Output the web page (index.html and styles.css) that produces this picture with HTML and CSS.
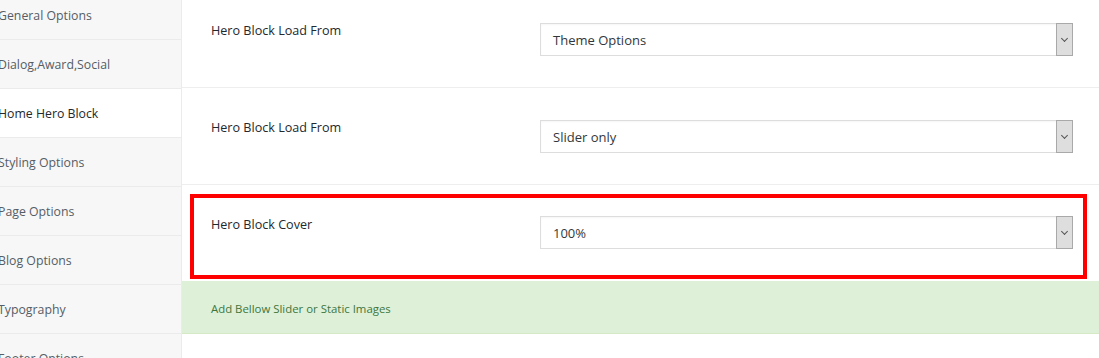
FILE: index.html
```html
<!DOCTYPE html>
<html lang="en">
<head>
    <meta charset="UTF-8">
    <meta name="viewport" content="width=device-width, initial-scale=1.0">
    <title>Theme Options - Home Hero Block</title>
    <link rel="stylesheet" href="styles.css">
</head>
<body>
    <div class="page">
        <!-- Options menu -->
        <aside class="sidebar">
            <ul class="menu">
                <li class="menu-item">General Options</li>
                <li class="menu-item">Dialog,Award,Social</li>
                <li class="menu-item active">Home Hero Block</li>
                <li class="menu-item">Styling Options</li>
                <li class="menu-item">Page Options</li>
                <li class="menu-item">Blog Options</li>
                <li class="menu-item">Typography</li>
                <li class="menu-item">Footer Options</li>
            </ul>
        </aside>

        <!-- Option fields -->
        <main class="content">
            <div class="field-row">
                <div class="field-label">Hero Block Load From</div>
                <div class="select">
                    <span class="select-value">Theme Options</span>
                    <span class="select-arrow"></span>
                </div>
            </div>

            <div class="field-row">
                <div class="field-label">Hero Block Load From</div>
                <div class="select">
                    <span class="select-value">Slider only</span>
                    <span class="select-arrow"></span>
                </div>
            </div>

            <div class="field-row marked">
                <div class="field-label">Hero Block Cover</div>
                <div class="select">
                    <span class="select-value">100%</span>
                    <span class="select-arrow"></span>
                </div>
                <span class="highlight-box"></span>
            </div>

            <div class="notice">Add Bellow Slider or Static Images</div>
        </main>
    </div>
</body>
</html>
```

FILE: styles.css
```css
/* General styling */
body {
    margin: 0;
    font-family: 'Open Sans', 'Noto Sans', Arial, sans-serif;
    font-size: 13px;
    color: #23282d;
    background-color: #fff;
    overflow: hidden;
}

.page {
    display: flex;
    margin-top: -9px; /* panel is scrolled a little */
    min-height: 400px;
}

/* Left options menu */
.sidebar {
    width: 181px;
    flex-shrink: 0;
    background-color: #f7f7f7;
    border-right: 1px solid #ebebeb;
}

.menu {
    list-style: none;
    margin: 0;
    padding: 0;
}

.menu-item {
    height: 48px;
    line-height: 50px;
    border-bottom: 1px solid #ebebeb;
    text-indent: -2px;
    font-size: 12.3px;
    color: #555d66;
    white-space: nowrap;
    overflow: hidden;
}

.menu-item.active {
    background-color: #fff;
    color: #23282d;
}

/* Option rows */
.content {
    flex: 1;
}

.field-row {
    position: relative;
    display: grid;
    grid-template-columns: 329px 533px;
    align-items: start;
    height: 97px;
    box-sizing: border-box;
    padding: 30px 0 0 29px;
    border-bottom: 1px solid #eee;
}

.field-row.marked {
    height: 96px;
    border-bottom: none;
    padding-top: 29px;
}

.field-label {
    margin-top: 1px;
    line-height: 18px;
    font-size: 12.6px;
}

.marked .field-label {
    margin-top: 2px;
}

.select {
    display: flex;
    align-items: center;
    height: 33px;
    margin-top: 2px;
    box-sizing: border-box;
    border: 1px solid #ddd;
    box-shadow: inset 0 1px 2px rgba(0, 0, 0, 0.04);
}

.select-value {
    flex: 1;
    padding-left: 12px;
    color: #32373c;
}

.select-arrow {
    position: relative;
    width: 17px;
    height: 33px;
    margin-right: -1px;
    box-sizing: border-box;
    background-color: #dedede;
    border: 1px solid #a9a9a9;
}

.select-arrow::after {
    content: "";
    position: absolute;
    left: 5px;
    top: 12px;
    width: 4px;
    height: 4px;
    border-right: 1px solid #555;
    border-bottom: 1px solid #555;
    transform: rotate(45deg);
}

/* Red annotation box drawn over the row */
.highlight-box {
    position: absolute;
    left: 8px;
    top: 9px;
    right: 12px;
    bottom: 2px;
    border: 4px solid #ff0000;
}

.notice {
    height: 50px;
    line-height: 52px;
    padding: 2px 0 0 29px;
    font-size: 11.4px;
    color: #3c763d;
    background-color: #dff0d8;
    border-bottom: 1px solid #d6e9c6;
}
```
